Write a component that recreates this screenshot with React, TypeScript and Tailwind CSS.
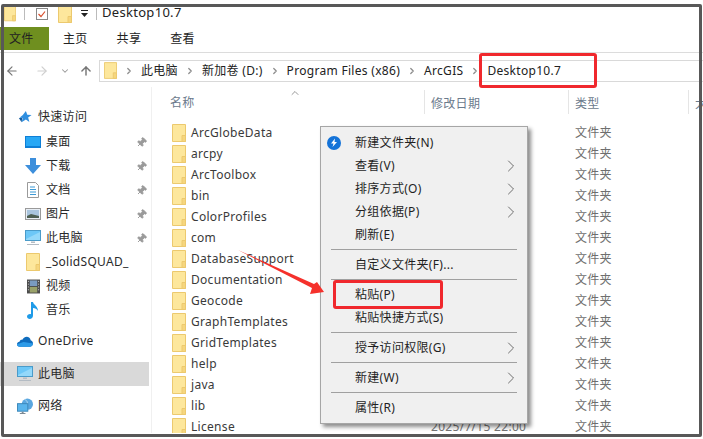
import { ArrowLeft, ArrowRight, ArrowUp, ChevronDown, ChevronRight, ChevronUp, Pin } from "lucide-react";
import type { ReactNode } from "react";

const font = { fontFamily: '"Noto Sans", "Noto Sans CJK SC", sans-serif' };

const files = [
  "ArcGlobeData", "arcpy", "ArcToolbox", "bin", "ColorProfiles", "com", "DatabaseSupport", "Documentation",
  "Geocode", "GraphTemplates", "GridTemplates", "help", "java", "lib", "License",
];

function Folder({ className = "w-[14px] h-[18px]" }: { className?: string }) {
  return (
    <svg viewBox="0 0 14 18" className={className}>
      <path d="M.5.5h13v17H.5z" fill="#fde79c" stroke="#ecc96e" />
      <path d="M10 17.5v-6h3.5v6z" fill="#f6d67e" stroke="#ecc96e" />
    </svg>
  );
}

function Crumb({ children }: { children: string }) {
  return (
    <>
      <ChevronRight size={10} strokeWidth={3} className="text-[#8d8d8d] shrink-0" />
      <span className="mx-[7px] whitespace-nowrap">{children}</span>
    </>
  );
}

function StarIcon() {
  return (
    <svg viewBox="0 0 16 16" className="w-[14px] h-[14px]">
      <path d="M9 1l1.6 4.4 4.9.2-3.9 3 1.4 5L9 10.800 4 14l1.500-5-3.800-.2 3.800-3z" fill="#2f8fe0" />
      <path d="M1 9h4l-1 5z" fill="#155a9c" />
    </svg>
  );
}
function DesktopIcon() {
  return (
    <svg viewBox="0 0 16 12" className="w-[16px] h-[12px]">
      <rect x="0" y="0" width="16" height="12" fill="#0f7fd6" />
      <rect x="1" y="1" width="14" height="9" fill="#28a8f5" />
    </svg>
  );
}
function DownIcon() {
  return (
    <svg viewBox="0 0 16 16" className="w-[16px] h-[16px]">
      <path d="M5 0h6v7h5l-8 9-8-9h5z" fill="#3d8fdc" />
    </svg>
  );
}
function DocIcon() {
  return (
    <svg viewBox="0 0 12 16" className="w-[12px] h-[16px]">
      <path d="M.5.5h8l3 3v12H.5z" fill="#fff" stroke="#9a9a9a" />
      <path d="M3 5h5M3 7.500h6M3 10h6M3 12.500h6" stroke="#3d9ad6" />
    </svg>
  );
}
function PictureIcon() {
  return (
    <svg viewBox="0 0 16 12" className="w-[16px] h-[12px]">
      <rect x=".5" y=".5" width="15" height="11" fill="#e8eef5" stroke="#9a9a9a" />
      <rect x="2" y="2" width="12" height="8" fill="#a9c5de" />
      <path d="M2 8l4-2 8 2v2H2z" fill="#4d5f52" />
    </svg>
  );
}
function PcIcon() {
  return (
    <svg viewBox="0 0 16 16" className="w-[16px] h-[16px]">
      <rect x=".5" y=".5" width="15" height="10" fill="#6cc7f7" stroke="#4a9bc9" />
      <path d="M1 9l14-7v8H1z" fill="#93d8fa" />
      <path d="M6 11.500h4v1.500H6zM2 14h12v1H2z" fill="#b4bcc4" />
    </svg>
  );
}
function FilmIcon() {
  return (
    <svg viewBox="0 0 14 15" className="w-[13px] h-[15px]">
      <rect width="14" height="15" fill="#4c4c4c" />
      <rect x="3" y="1" width="8" height="6" fill="#7a9bc0" />
      <rect x="3" y="8" width="8" height="6" fill="#9aa26a" />
      <path d="M1 2h1M1 5h1M1 8h1M1 11h1M12 2h1M12 5h1M12 8h1M12 11h1" stroke="#ddd" />
    </svg>
  );
}
function NoteIcon() {
  return (
    <svg viewBox="0 0 12 17" className="w-[12px] h-[17px]">
      <path d="M4 0h2c.5 3 5 4 5 9-1-2-3-3-5-3v7.500C6 15.500 4.500 17 2.800 17 1.200 17 0 16 0 14.500 0 13 1.500 12 3 12c.4 0 .7 0 1 .2z" fill="#1f9be8" />
    </svg>
  );
}
function CloudIcon() {
  return (
    <svg viewBox="0 0 17 11" className="w-[17px] h-[11px]">
      <path d="M3 11C1 11 0 9.800 0 8.300 0 6.800 1.200 5.800 2.600 5.700 3.200 4 4.500 3.200 6 3.300 7 1.500 8.500.5 10.200.5c2.300 0 4 1.600 4.300 3.700C16 4.600 17 6 17 7.500c0 2-1.500 3.500-3.500 3.500z" fill="#0f6cbd" />
      <path d="M3 11C1 11 0 9.800 0 8.300L7 6l10 1.500c0 2-1.500 3.500-3.500 3.500z" fill="#2d9be8" />
    </svg>
  );
}
function NetworkIcon() {
  return (
    <svg viewBox="0 0 17 17" className="w-[17px] h-[17px]">
      <circle cx="11" cy="6" r="6" fill="#5aa7e0" />
      <path d="M8 1c3 1 4 4 2 7" stroke="#b6dbf2" fill="none" />
      <rect x=".5" y="5.500" width="11" height="8" fill="#59b4ec" stroke="#3a86b8" />
      <path d="M5 14h2v1.500H5zM3 15.500h6v1H3z" fill="#7d8a94" />
    </svg>
  );
}

function NavRow({
  icon,
  label,
  pin,
  selected,
  top,
}: {
  icon: ReactNode;
  label: string;
  pin?: boolean;
  selected?: boolean;
  top?: boolean;
}) {
  return (
    <div
      className={`h-[24px] flex items-center pr-[2px] ${selected ? "bg-[#d9d9d9]" : ""} ${top ? "pl-[17px]" : "pl-[25px]"}`}
    >
      <span className="w-[16px] h-[18px] flex items-center justify-center shrink-0">{icon}</span>
      <span className="ml-[5px] text-[#2a2a2a] whitespace-nowrap">{label}</span>
      {pin && <Pin size={11} strokeWidth={2} fill="#9a9a9a" className="ml-auto mr-[2px] text-[#9a9a9a] rotate-45" />}
    </div>
  );
}

function MenuItem({ label, sub, icon }: { label: string; sub?: boolean; icon?: ReactNode }) {
  return (
    <div className="h-[23px] flex items-center text-[#1f1f1f] relative">
      <span className="w-[34px] flex justify-center shrink-0 pl-[1px] pr-[9px]">{icon}</span>
      <span className="whitespace-nowrap">{label}</span>
      {sub && <ChevronRight size={20} strokeWidth={1} className="ml-auto mr-[6px] text-[#555]" />}
    </div>
  );
}

function MenuSep() {
  return <div className="h-[7px] flex items-center pl-[10px] pr-[10px]"><div className="h-px w-full bg-[#a0a0a0]" /></div>;
}

export default function App() {
  return (
    <div className="relative w-[703px] h-[439px] bg-white overflow-hidden text-[12px] tracking-[0.3px]" style={font}>
      <div className="h-[433px] overflow-hidden flex flex-col">
        {/* title bar */}
        <div className="h-[27px] shrink-0 flex items-center pl-[4px] text-[#222]">
          <Folder className="w-[12px] h-[17px]" />
          <div className="w-px h-[12px] bg-[#bbb] ml-[8px]" />
          <svg viewBox="0 0 12 12" className="w-[12px] h-[12px] ml-[11px]">
            <rect x=".5" y=".5" width="11" height="11" fill="#fff" stroke="#888" />
            <path d="M2.500 6l2.500 2.500 4-5" stroke="#d8502e" strokeWidth="1.200" fill="none" />
          </svg>
          <div className="ml-[10px]">
            <Folder />
          </div>
          <svg viewBox="0 0 10 8" className="w-[10px] h-[8px] ml-[8px]">
            <path d="M1 0h7v1H1zM1 3h7L4.500 7z" fill="#222" />
          </svg>
          <div className="w-px h-[12px] bg-[#bbb] ml-[6px]" />
          <span className="ml-[5px] -mt-[2px] text-[13px] leading-none">Desktop10.7</span>
        </div>
        {/* ribbon */}
        <div className="h-[26px] shrink-0 flex items-start border-b border-[#dcdcdc] text-[#222]">
          <div className="w-[49px] h-[23px] bg-[#6f8f1f] flex items-center pl-[9px]">文件</div>
          <div className="h-[23px] flex items-center ml-[14px] gap-[29px]">
            <span>主页</span>
            <span>共享</span>
            <span>查看</span>
          </div>
        </div>
        {/* address */}
        <div className="h-[34px] shrink-0 flex items-center pt-[1px] text-[#444]">
          <ArrowLeft size={14} strokeWidth={2} className="ml-[5px] text-[#777]" />
          <ArrowRight size={14} strokeWidth={2} className="ml-[16px] text-[#cfcfcf]" />
          <ChevronDown size={10} strokeWidth={2.5} className="ml-[11px] text-[#999]" />
          <ArrowUp size={14} strokeWidth={2.5} className="ml-[9px] text-[#777]" />
          <div className="ml-[6px] flex-1 h-[22px] border border-[#d9d9d9] border-r-0 flex items-center pl-[4px] text-[#222]">
            <Folder className="w-[13px] h-[17px] mr-[7px]" />
            <Crumb>此电脑</Crumb>
            <Crumb>新加卷 (D:)</Crumb>
            <Crumb>Program Files (x86)</Crumb>
            <Crumb>ArcGIS</Crumb>
            <Crumb>Desktop10.7</Crumb>
          </div>
        </div>
        {/* body */}
        <div className="flex flex-1 min-h-0">
          <div className="w-[152px] shrink-0 border-r border-[#f0f0f0] pt-[18px]">
            <NavRow top icon={<StarIcon />} label="快速访问" />
            <div className="h-px" />
            <NavRow icon={<DesktopIcon />} label="桌面" pin />
            <NavRow icon={<DownIcon />} label="下载" pin />
            <NavRow icon={<DocIcon />} label="文档" pin />
            <NavRow icon={<PictureIcon />} label="图片" pin />
            <NavRow icon={<PcIcon />} label="此电脑" pin />
            <NavRow icon={<Folder />} label="_SolidSQUAD_" />
            <NavRow icon={<FilmIcon />} label="视频" />
            <NavRow icon={<NoteIcon />} label="音乐" />
            <div className="h-[7px]" />
            <NavRow top icon={<CloudIcon />} label="OneDrive" />
            <div className="h-[9px]" />
            <div className="w-[149px]">
              <NavRow top selected icon={<PcIcon />} label="此电脑" />
            </div>
            <div className="h-[8px]" />
            <NavRow top icon={<NetworkIcon />} label="网络" />
          </div>
          <div className="flex-1 min-w-0">
            <div className="relative h-[35px] grid grid-cols-[272px_144px_120px_1fr] text-[#6b7a8c]">
              <div className="pl-[18px] pt-[7px]">名称</div>
              <div className="border-l border-[#e5e5e5] pl-[6px] pt-[6px] mt-[3px] mb-[8px] leading-[15px]">修改日期</div>
              <div className="border-l border-[#e5e5e5] pl-[6px] pt-[6px] mt-[3px] mb-[8px] leading-[15px]">类型</div>
              <div className="border-l border-[#e5e5e5] pl-[6px] pt-[6px] mt-[3px] mb-[8px] leading-[15px] overflow-hidden">大小</div>
              <ChevronUp size={12} strokeWidth={1.5} className="absolute left-[137px] top-0 text-[#777]" />
            </div>
            {files.map((name, i) => (
              <div key={name} className="h-[21px] grid grid-cols-[272px_144px_120px_1fr] items-center">
                <div className="flex items-center pl-[20px] text-[#3a3a3a]">
                  <Folder />
                  <span className="ml-[5px]">{name}</span>
                </div>
                <div className="pl-[7px] text-[#777]">{i === files.length - 1 ? "2025/7/15 22:00" : ""}</div>
                <div className="pl-[7px] text-[#6e6e6e]">文件夹</div>
                <div />
              </div>
            ))}
          </div>
        </div>
      </div>

      {/* context menu */}
      <div className="absolute left-[320px] top-[126px] w-[208px] h-[298px] bg-[#f0f0f0] border border-[#a6a6a6] pt-[4px] shadow-[3px_3px_4px_rgba(0,0,0,0.45)]">
        <MenuItem
          label="新建文件夹(N)"
          icon={
            <svg viewBox="0 0 14 14" className="w-[14px] h-[14px]">
              <circle cx="7" cy="7" r="7" fill="#1473d8" />
              <path d="M8 2.500L4 7.500h2.500L5.500 11 10 6H7.500z" fill="#fff" />
            </svg>
          }
        />
        <MenuItem label="查看(V)" sub />
        <MenuItem label="排序方式(O)" sub />
        <MenuItem label="分组依据(P)" sub />
        <MenuItem label="刷新(E)" />
        <MenuSep />
        <MenuItem label="自定义文件夹(F)..." />
        <MenuSep />
        <MenuItem label="粘贴(P)" />
        <MenuItem label="粘贴快捷方式(S)" />
        <MenuSep />
        <MenuItem label="授予访问权限(G)" sub />
        <MenuSep />
        <MenuItem label="新建(W)" sub />
        <MenuSep />
        <MenuItem label="属性(R)" />
      </div>

      {/* screenshot annotations */}
      <div className="absolute left-[1px] top-[4px] w-[701px] h-[433px] border-[3px] border-[#585858] rounded-[2px] pointer-events-none" />
      <div className="absolute left-[479px] top-[53px] w-[118px] h-[35px] border-[3px] border-[#f0282d] rounded-[3px]" />
      <div className="absolute left-[333px] top-[280px] w-[110px] h-[29px] border-[3px] border-[#f0282d] rounded-[3px]" />
      <svg viewBox="0 0 703 439" className="absolute inset-0 w-[703px] h-[439px] pointer-events-none">
        <polygon points="238,250 314,284 317,282 324,292 310,294 312,288" fill="#f5312c" />
      </svg>
    </div>
  );
}
